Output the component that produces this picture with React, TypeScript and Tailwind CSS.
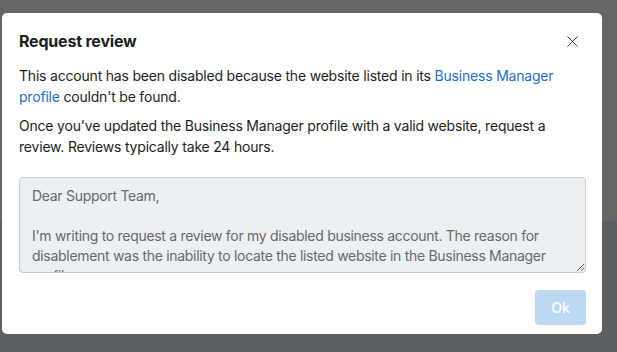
import { X } from "lucide-react";

const letter = `Dear Support Team,

I'm writing to request a review for my disabled business account. The reason for disablement was the inability to locate the listed website in the Business Manager profile.`;

export default function App() {
  return (
    <div
      className="relative h-[352px] w-[617px] overflow-hidden"
      style={{ fontFamily: "Inter, 'Noto Sans', sans-serif" }}
    >
      <div className="flex h-full flex-col">
        <div className="h-[221px] bg-[#666666]" />
        <div className="flex-1 bg-[#5b5e62]" />
      </div>

      <div className="absolute left-[2px] top-[13px] w-[600px] rounded-[5px] bg-white pb-[9px] pl-[17px] pr-[16px] pt-[18px] text-[#1c1e21]">
        <div className="flex items-center justify-between">
          <h2 className="text-[16px] font-bold leading-[20px] tracking-[-0.2px]">Request review</h2>
          <button className="mr-[4px] text-[#1c1e21]" aria-label="Close">
            <X size={19} strokeWidth={1.1} />
          </button>
        </div>

        <p className="mt-[14px] text-[14px] leading-[21px] tracking-[-0.2px]">
          This account has been disabled because the website listed in its{" "}
          <a className="text-[#1f6fc5]">Business Manager profile</a> couldn't be found.
        </p>
        <p className="mt-[8px] text-[14px] leading-[21px] tracking-[-0.2px]">
          Once you've updated the Business Manager profile with a valid website, request a
          review. Reviews typically take 24 hours.
        </p>

        <textarea
          readOnly
          value={letter}
          className="mt-[20px] block h-[96px] w-full resize-y overflow-hidden rounded-[4px] border border-[#c9cdd2] bg-[#edf0f3] px-[12px] pt-[8px] text-[14px] leading-[20px] tracking-[-0.3px] text-[#65686c] outline-none"
        />

        <div className="mt-[17px] flex justify-end">
          <button className="h-[35px] w-[51px] rounded-[4px] bg-[#bcd8f2] text-[14px] font-medium text-white">
            Ok
          </button>
        </div>
      </div>
    </div>
  );
}
